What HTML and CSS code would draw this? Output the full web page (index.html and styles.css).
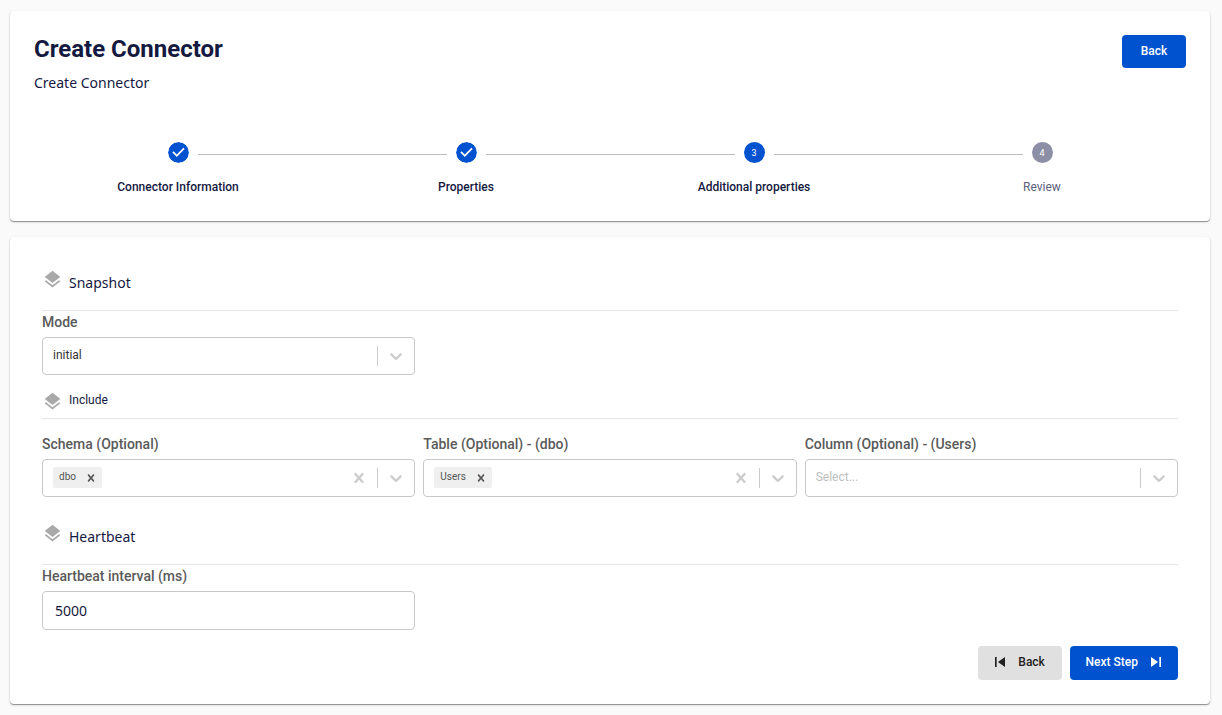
FILE: index.html
```html
<!DOCTYPE html>
<html lang="en">
<head>
<meta charset="utf-8">
<title>Create Connector</title>
<link rel="stylesheet" href="styles.css">
</head>
<body>
<svg class="sprite" aria-hidden="true">
  <symbol id="check" viewBox="0 0 24 24"><path d="M12 0a12 12 0 1 0 0 24 12 12 0 0 0 0-24zm-2 17l-5-5 1.4-1.4 3.6 3.6 7.6-7.6L19 8l-9 9z"/></symbol>
  <symbol id="layers" viewBox="0 0 24 24"><path d="M11.99 18.54l-7.37-5.73L3 14.07l9 7 9-7-1.63-1.27-7.38 5.74zM12 16l7.36-5.73L21 9l-9-7-9 7 1.63 1.27L12 16z"/></symbol>
  <symbol id="chevron" viewBox="0 0 20 20"><path d="M4.516 7.548c0.436-0.446 1.043-0.481 1.576 0l3.908 3.747 3.908-3.747c0.533-0.481 1.141-0.446 1.574 0 0.436 0.445 0.408 1.197 0 1.615-0.406 0.418-4.695 4.502-4.695 4.502-0.217 0.223-0.502 0.335-0.787 0.335s-0.57-0.112-0.789-0.335c0 0-4.287-4.084-4.695-4.502s-0.436-1.17 0-1.615z"/></symbol>
  <symbol id="cross" viewBox="0 0 20 20"><path d="M14.348 14.849c-0.469 0.469-1.229 0.469-1.697 0l-2.651-3.030-2.651 3.029c-0.469 0.469-1.229 0.469-1.697 0-0.469-0.469-0.469-1.229 0-1.697l2.758-3.15-2.759-3.152c-0.469-0.469-0.469-1.228 0-1.697s1.228-0.469 1.697 0l2.652 3.031 2.651-3.031c0.469-0.469 1.228-0.469 1.697 0s0.469 1.229 0 1.697l-2.758 3.152 2.758 3.15c0.469 0.469 0.469 1.229 0 1.698z"/></symbol>
  <symbol id="previous" viewBox="0 0 24 24"><path d="M6 6h2v12H6zm3.500 6l8.500 6V6z"/></symbol>
  <symbol id="next" viewBox="0 0 24 24"><path d="M6 18l8.500-6L6 6v12zM16 6v12h2V6h-2z"/></symbol>
</svg>

<header class="card intro">
  <div class="intro-top">
    <div>
      <h1 class="title">Create Connector</h1>
      <p class="subtitle">Create Connector</p>
    </div>
    <button class="button primary" type="button">Back</button>
  </div>
  <ol class="stepper">
    <li class="step">
      <div class="track"><svg class="dot done"><use href="#check"/></svg><i class="line after"></i></div>
      <span class="step-label">Connector Information</span>
    </li>
    <li class="step">
      <div class="track"><i class="line before"></i><svg class="dot done"><use href="#check"/></svg><i class="line after"></i></div>
      <span class="step-label">Properties</span>
    </li>
    <li class="step" aria-current="step">
      <div class="track"><i class="line before"></i><span class="dot current">3</span><i class="line after"></i></div>
      <span class="step-label">Additional properties</span>
    </li>
    <li class="step">
      <div class="track"><i class="line before"></i><span class="dot pending">4</span></div>
      <span class="step-label muted">Review</span>
    </li>
  </ol>
</header>

<main class="card">
  <form class="form">
    <section>
      <h2 class="section-head"><svg class="layers"><use href="#layers"/></svg><span class="section-name">Snapshot</span></h2>
      <div class="fields">
        <div class="field">
          <label class="label" for="mode">Mode</label>
          <div class="control">
            <select class="select" id="mode"><option>initial</option></select>
            <i class="separator"></i>
            <svg class="indicator"><use href="#chevron"/></svg>
          </div>
        </div>
      </div>
    </section>

    <section class="include">
      <h2 class="section-head compact"><svg class="layers"><use href="#layers"/></svg><span class="section-name">Include</span></h2>
      <div class="fields">
        <div class="field">
          <label class="label" for="schema">Schema (Optional)</label>
          <div class="control">
            <span class="chip"><span class="chip-text">dbo</span><button class="chip-remove" type="button" aria-label="Remove dbo"><svg class="chip-icon"><use href="#cross"/></svg></button></span>
            <input class="search" id="schema" type="text" role="combobox" aria-expanded="false">
            <button class="tool" type="button" aria-label="Clear schema"><svg class="indicator"><use href="#cross"/></svg></button>
            <i class="separator"></i>
            <button class="tool" type="button" aria-label="Open schema list"><svg class="indicator"><use href="#chevron"/></svg></button>
          </div>
        </div>
        <div class="field">
          <label class="label" for="table">Table (Optional) - (dbo)</label>
          <div class="control">
            <span class="chip"><span class="chip-text">Users</span><button class="chip-remove" type="button" aria-label="Remove Users"><svg class="chip-icon"><use href="#cross"/></svg></button></span>
            <input class="search" id="table" type="text" role="combobox" aria-expanded="false">
            <button class="tool" type="button" aria-label="Clear table"><svg class="indicator"><use href="#cross"/></svg></button>
            <i class="separator"></i>
            <button class="tool" type="button" aria-label="Open table list"><svg class="indicator"><use href="#chevron"/></svg></button>
          </div>
        </div>
        <div class="field">
          <label class="label" for="column">Column (Optional) - (Users)</label>
          <div class="control">
            <input class="search" id="column" type="text" role="combobox" aria-expanded="false" placeholder="Select...">
            <i class="separator"></i>
            <button class="tool" type="button" aria-label="Open column list"><svg class="indicator"><use href="#chevron"/></svg></button>
          </div>
        </div>
      </div>
    </section>

    <section>
      <h2 class="section-head"><svg class="layers"><use href="#layers"/></svg><span class="section-name">Heartbeat</span></h2>
      <div class="fields">
        <div class="field">
          <label class="label" for="interval">Heartbeat interval (ms)</label>
          <input class="text-input" id="interval" type="text" inputmode="numeric" value="5000">
        </div>
      </div>
    </section>

    <div class="actions">
      <button class="button neutral previous" type="button"><svg class="button-icon"><use href="#previous"/></svg>Back</button>
      <button class="button primary next" type="submit">Next Step<svg class="button-icon"><use href="#next"/></svg></button>
    </div>
  </form>
</main>
</body>
</html>
```

FILE: styles.css
```css
* {
  box-sizing: border-box;
}

body {
  display: flex;
  flex-direction: column;
  gap: 16px;
  margin: 0;
  padding: 11px 12px 11px 10px;
  background: #fafafa;
  color: #14193f;
  font-family: Roboto, "Liberation Sans", sans-serif;
  font-size: 12px;
}

h1, h2, p, ol {
  margin: 0;
  padding: 0;
}

button, input, select {
  font-family: inherit;
}

.sprite {
  position: absolute;
  width: 0;
  height: 0;
}

svg {
  display: block;
  flex: none;
  fill: currentColor;
}

.card {
  background: #fff;
  border-radius: 4px;
  box-shadow: 0 1px 1px rgba(0, 0, 0, .38), 0 1px 3px rgba(0, 0, 0, .12);
}

.intro {
  padding: 24px;
}

.intro-top {
  display: flex;
  justify-content: space-between;
  align-items: flex-start;
}

.title {
  font-size: 24px;
  font-weight: 700;
  line-height: 28px;
}

.subtitle {
  margin-top: 9px;
  font-family: "Noto Sans", sans-serif;
  font-size: 14px;
  line-height: 22px;
}

.button {
  display: flex;
  align-items: center;
  justify-content: center;
  gap: 8px;
  height: 34px;
  padding: 0 16px 2px;
  border: 0;
  border-radius: 4px;
  font-size: 12px;
  font-weight: 500;
}

.intro .button {
  width: 64px;
  height: 33px;
}

.previous {
  min-width: 84px;
  padding-left: 12px;
}

.next {
  padding-right: 12px;
}

.primary {
  background: #0052cf;
  color: #fff;
}

.neutral {
  background: #e0e0e0;
  color: #222;
}

.stepper {
  display: grid;
  grid-template-columns: repeat(4, 1fr);
  margin-top: 48px;
  list-style: none;
}

.step {
  text-align: center;
}

.track {
  display: grid;
  grid-template-columns: 1fr 21px 1fr;
  column-gap: 9px;
  align-items: center;
}

.dot {
  grid-column: 2;
  grid-row: 1;
  width: 21px;
  height: 21px;
  border-radius: 50%;
  font-size: 9px;
  line-height: 22px;
}

.done {
  color: #0052cf;
}

.current {
  background: #0052cf;
  color: #fff;
}

.pending {
  background: #8c8fa5;
  color: #fff;
}

.line {
  grid-row: 1;
  height: 1px;
  margin-top: 3px;
  background: #bdbdbd;
}

.before {
  grid-column: 1;
}

.after {
  grid-column: 3;
}

.step-label {
  display: block;
  margin-top: 14px;
  font-weight: 500;
  line-height: 20px;
}

.muted {
  color: #5b5f7d;
  font-weight: 400;
}

.form {
  padding: 32px 32px 24px;
}

.section-head {
  display: flex;
  gap: 6px;
  height: 42px;
  border-bottom: 1px solid #e6e6e6;
  font-family: "Noto Sans", sans-serif;
  font-size: 14px;
  font-weight: 400;
  line-height: 28px;
}

.compact {
  height: 28px;
  font-family: Roboto, sans-serif;
  font-size: 12px;
  line-height: 18px;
}

.layers {
  width: 21px;
  height: 21px;
  color: #a9a9a9;
}

.include {
  padding: 16px 0 26px;
}

.include .fields {
  margin-top: 14px;
}

.fields {
  display: grid;
  grid-template-columns: repeat(3, 1fr);
  gap: 8px;
}

.label {
  display: block;
  margin-bottom: 4px;
  color: #5a5a5a;
  font-size: 14px;
  font-weight: 500;
  line-height: 22px;
}

.control {
  display: flex;
  align-items: center;
  height: 38px;
  padding: 0 8px 0 10px;
  border: 1px solid #c8c8c8;
  border-radius: 4px;
  color: #ccc;
}

.select, .search {
  flex: 1;
  min-width: 0;
  height: 36px;
  padding: 0 0 2px;
  border: 0;
  outline: 0;
  appearance: none;
  background: transparent;
  color: #333;
  font-size: 12px;
}

.search::placeholder {
  color: #bdbdbd;
}

.separator {
  width: 1px;
  height: 20px;
  margin-right: 8px;
  background: #ccc;
}

.indicator {
  width: 20px;
  height: 20px;
}

.tool, .chip-remove {
  padding: 0;
  border: 0;
  background: none;
  color: inherit;
}

.tool + .separator {
  margin-left: 8px;
}

.chip {
  display: flex;
  align-items: center;
  gap: 8px;
  height: 21px;
  margin-bottom: 1px;
  padding: 0 4px 0 6px;
  border-radius: 2px;
  background: #efefef;
  color: #555;
  font-size: 10px;
}

.chip-text {
  padding-bottom: 2px;
}

.chip-icon {
  width: 14px;
  height: 14px;
}

.text-input {
  display: block;
  width: 100%;
  height: 39px;
  padding: 0 12px;
  border: 1px solid #c8c8c8;
  border-radius: 4px;
  background: #fff;
  color: #14193f;
  font-family: "Noto Sans", sans-serif;
  font-size: 14px;
}

.actions {
  display: flex;
  justify-content: flex-end;
  gap: 8px;
  margin-top: 16px;
}

.button-icon {
  width: 20px;
  height: 20px;
}
```
